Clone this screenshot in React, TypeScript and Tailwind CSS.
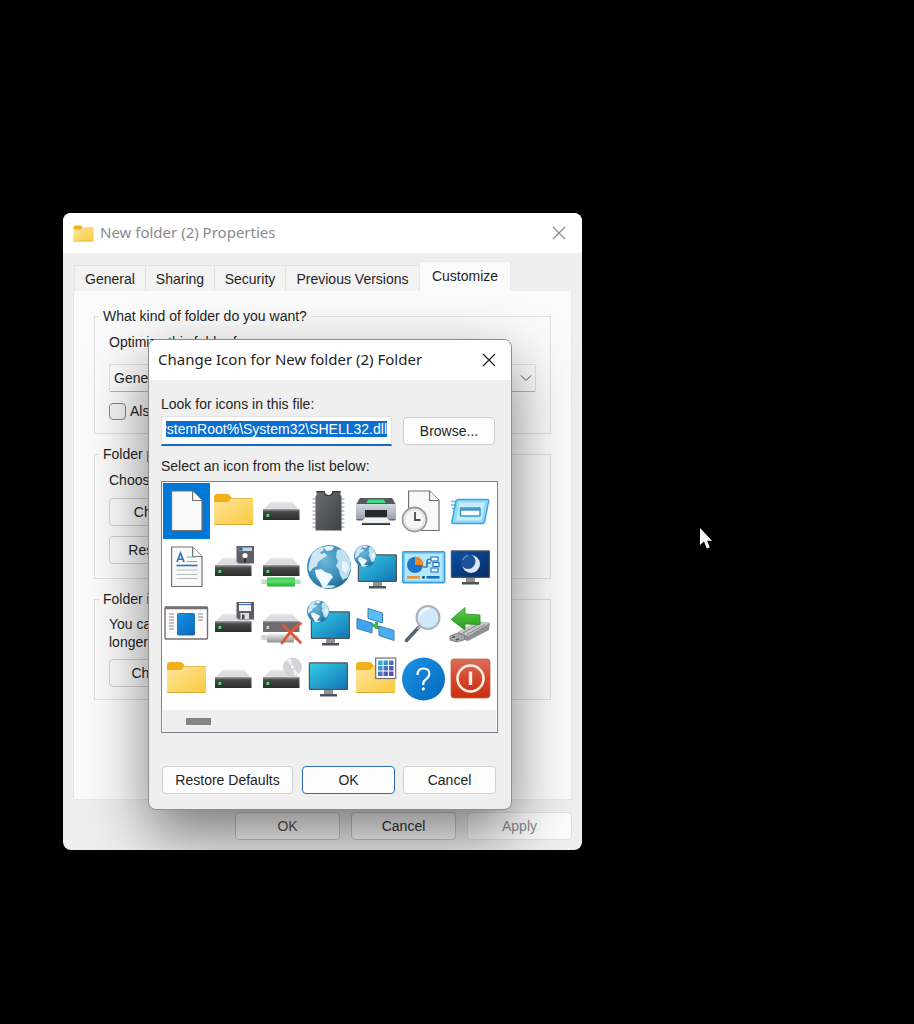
import React, { useEffect, useRef, useState } from 'react';

const fileName = '%SystemRoot%\\System32\\SHELL32.dll';

const Defs = () => (
  <svg width="0" height="0" className="absolute" aria-hidden="true">
    <defs>
      <linearGradient id="folder" x1="0" y1="0" x2="1" y2="1">
        <stop offset="0" stopColor="#ffe69c" />
        <stop offset="1" stopColor="#fbc93f" />
      </linearGradient>
      <linearGradient id="driveFront" x1="0" y1="0" x2="0" y2="1">
        <stop offset="0" stopColor="#6a6a6a" />
        <stop offset="0.3" stopColor="#454545" />
        <stop offset="1" stopColor="#2c2c2c" />
      </linearGradient>
      <linearGradient id="chip" x1="0" y1="0" x2="1" y2="1">
        <stop offset="0" stopColor="#6a6e72" />
        <stop offset="1" stopColor="#3d4145" />
      </linearGradient>
      <linearGradient id="screen" x1="0" y1="0" x2="1" y2="1">
        <stop offset="0" stopColor="#35d0e8" />
        <stop offset="1" stopColor="#1271b4" />
      </linearGradient>
      <linearGradient id="night" x1="0" y1="0" x2="1" y2="1">
        <stop offset="0" stopColor="#0b4fa0" />
        <stop offset="1" stopColor="#082a63" />
      </linearGradient>
      <linearGradient id="blue" x1="0" y1="0" x2="1" y2="1">
        <stop offset="0" stopColor="#1a93e6" />
        <stop offset="1" stopColor="#0668bd" />
      </linearGradient>
      <linearGradient id="red" x1="0" y1="0" x2="0" y2="1">
        <stop offset="0" stopColor="#d9705a" />
        <stop offset="0.5" stopColor="#d4462a" />
        <stop offset="1" stopColor="#c9300f" />
      </linearGradient>
      <linearGradient id="pipe" x1="0" y1="0" x2="0" y2="1">
        <stop offset="0" stopColor="#35c84a" />
        <stop offset="0.4" stopColor="#5fe070" />
        <stop offset="1" stopColor="#1fae36" />
      </linearGradient>
      <linearGradient id="metal" x1="0" y1="0" x2="0" y2="1">
        <stop offset="0" stopColor="#f2f2f2" />
        <stop offset="1" stopColor="#8f8f8f" />
      </linearGradient>
      <linearGradient id="printer" x1="0" y1="0" x2="0" y2="1">
        <stop offset="0" stopColor="#d3dae1" />
        <stop offset="1" stopColor="#98a2ad" />
      </linearGradient>
      <linearGradient id="arrow" x1="0" y1="0" x2="0" y2="1">
        <stop offset="0" stopColor="#5fd04a" />
        <stop offset="1" stopColor="#239a1c" />
      </linearGradient>
      <linearGradient id="grid" x1="0" y1="0" x2="1" y2="1">
        <stop offset="0" stopColor="#2ec4dd" />
        <stop offset="0.6" stopColor="#4a64b8" />
        <stop offset="1" stopColor="#6b3fa8" />
      </linearGradient>
      <radialGradient id="ocean" cx="0.4" cy="0.35" r="0.75">
        <stop offset="0" stopColor="#6cb6dc" />
        <stop offset="0.6" stopColor="#3a8cb9" />
        <stop offset="1" stopColor="#1b5f86" />
      </radialGradient>
    </defs>
  </svg>
);

const FolderShape = () => (
  <g>
    <path d="M4 14q0-3 3-3h10q1.500 0 2.500 1l2.500 3-3 4H4z" fill="#f3ae1b" />
    <path d="M4 19h14l4-4h20q1 0 1 1v25q0 1-1 1H5q-1 0-1-1z" fill="url(#folder)" />
    <path d="M4.500 41.500h38" stroke="#d9a838" strokeWidth="1" />
    <path d="M22 15.500h20.500" stroke="#e0b450" strokeWidth="0.800" />
  </g>
);

const DriveShape = ({ light = true }: { light?: boolean }) => (
  <g>
    <path d="M12.500 19h21.500l7.500 8H5z" fill="#dcdde0" />
    <path d="M12.500 19h21.500l1.500 1.600H11z" fill="#e9e9eb" />
    <rect x="5" y="26.500" width="36.500" height="10.500" fill={light ? 'url(#driveFront)' : '#6d6b6b'} />
    <path d="M5 27h36.500" stroke="#8a8a8a" strokeWidth="0.800" />
    <rect x="8.500" y="31" width="2.600" height="3" fill={light ? '#4fe070' : '#d0d0d0'} />
  </g>
);

const FloppyShape = ({ open }: { open?: boolean }) => (
  <g>
    <path d="M26.500 7H44v17.500H28.500l-2-2z" fill="#5e5f64" />
    {open ? (
      <>
        <rect x="29" y="8" width="12" height="8" fill="#f4f6fa" />
        <path d="M29 9.500h12" stroke="#3a76c8" strokeWidth="1.200" />
        <rect x="30.500" y="18" width="8.500" height="6" fill="#dfe0e3" />
        <rect x="32" y="19.500" width="2.500" height="4.500" fill="#44464b" />
      </>
    ) : (
      <>
        <rect x="28.500" y="8.500" width="13.500" height="3.500" fill="#c4d3e6" />
        <rect x="28.500" y="8.500" width="4" height="3" fill="#2c62a8" />
        <circle cx="35" cy="16.500" r="2.600" fill="#f5f5f5" />
        <rect x="34" y="19.500" width="2" height="4" fill="#26272b" />
      </>
    )}
  </g>
);

// land shapes are drawn on a 44px globe and scaled to r
const GlobeShape = ({ cx, cy, r }: { cx: number; cy: number; r: number }) => (
  <g transform={`translate(${cx} ${cy}) scale(${r / 22})`}>
    <circle r="22" fill="url(#ocean)" />
    <path d="M-17-13q4-5 9-7l3 1-1 3-3 1 1 2 4-1 2 3-5 3-4 3-1 4-4 2-3 4q-2-3-1-8z" fill="#cfe7f3" />
    <path d="M-6-20q6-2 11 0l-2 3-5 1z" fill="#eaf6fb" />
    <path d="M-14 3l6-1 4 3 6 2 2 3-4 5-3 5-3 1-3-6-4-6z" fill="#f0f9fd" />
    <path d="M8-17l5-1 4 4 4 7 1 8-3 9-5 3-3-5-1-5-3-4 2-5-2-4z" fill="#bfe0ef" />
    <path d="M13-6l5 1 2 5-3 6-4-3z" fill="#e9f5fb" />
    <path d="M-8 20q7-3 15-1-7 4-15 1z" fill="#d8edf7" />
  </g>
);

const MonitorShape = ({ fill = 'url(#screen)' }: { fill?: string }) => (
  <g>
    <rect x="19" y="38" width="9" height="5.500" fill="#8c9298" />
    <rect x="15" y="43" width="17" height="2.500" fill="#4c5258" />
    <rect x="4.400" y="11.900" width="38" height="26.500" rx="0.600" fill={fill} stroke="#4d565e" strokeWidth="1.200" />
  </g>
);

const PageShape = () => (
  <g>
    <path d="M8.600 8h21l9.400 9.500v30H8.600z" fill="#f9f9f9" stroke="#77706e" strokeWidth="1.200" />
    <path d="M29.600 8v9.500H39" fill="#fff" stroke="#77706e" strokeWidth="1.200" />
  </g>
);

const icons: { name: string; art: React.ReactNode }[] = [
  { name: 'Document', art: <PageShape /> },
  { name: 'Folder', art: <FolderShape /> },
  { name: 'Drive', art: <DriveShape /> },
  {
    name: 'Chip',
    art: (
      <g>
        <path d="M7.500 16h32M7.500 20h32M7.500 24h32M7.500 28h32M7.500 32h32M7.500 36h32M7.500 40h32M7.500 44h32" stroke="#b4b8bb" strokeWidth="1.400" />
        <path d="M11.500 8h7.500q.5 4.500 4.500 4.500T28 8h7.500v4l1 1v34.500h-26V13l1-1z" fill="url(#chip)" />
        <path d="M11.500 8.600h7.700q.6 4 4.300 4t4.300-4h7.700" fill="none" stroke="#34383b" strokeWidth="1.200" />
      </g>
    ),
  },
  {
    name: 'Printer',
    art: (
      <g>
        <path d="M8 15h32l4 6.500H4z" fill="#54585c" />
        <path d="M16 16.500h16l1.500 3.500H14.500z" fill="#3fdc84" />
        <rect x="4" y="21" width="40" height="15.500" rx="1" fill="url(#printer)" />
        <rect x="13" y="27" width="22" height="8" fill="#26292c" />
        <path d="M4 36h7l-.5 1.500H5zM37 36h7l-1 1.500h-5.500z" fill="#5f666d" />
        <path d="M10.500 39.500h27l1 2.500H9.500z" fill="#2f3235" />
        <path d="M13 34.500h22l2.500 5.500h-27z" fill="#f1f3f5" stroke="#c4c8cc" strokeWidth="0.500" />
      </g>
    ),
  },
  {
    name: 'Recent document',
    art: (
      <g>
        <PageShape />
        <circle cx="14.500" cy="36.500" r="12" fill="#eeeeee" stroke="#9b9b9b" strokeWidth="1.800" />
        <circle cx="14.500" cy="36.500" r="9.800" fill="#f7f7f7" stroke="#d6d6d6" strokeWidth="0.800" />
        <path d="M15 29v8h5.500" fill="none" stroke="#4b4b4b" strokeWidth="1.800" />
      </g>
    ),
  },
  {
    name: 'Run',
    art: (
      <g>
        <path d="M4 18.500h8M4 22h7M5 25.500h6" stroke="#62bdea" strokeWidth="1.300" />
        <path d="M11 16.500h29q2 0 1.600 2l-4 20q-.4 2-2.400 2H6.500q-2 0-1.600-2l4-20q.4-2 2.100-2z" fill="#8fd8f7" stroke="#3ba3dc" strokeWidth="1.400" />
        <path d="M12.500 19.500h25.500l-3.500 18H9z" fill="#c4ecfb" />
        <rect x="13.500" y="25" width="19.500" height="8" rx="0.600" fill="#fff" stroke="#3b97cf" strokeWidth="1.500" />
        <path d="M13.500 26.500H33" stroke="#3b97cf" strokeWidth="2.400" />
      </g>
    ),
  },
  {
    name: 'Text document',
    art: (
      <g>
        <PageShape />
        <path d="M14 23l3.500-9 3.500 9M15.200 20.300h4.600" fill="none" stroke="#2a6fc2" strokeWidth="1.600" />
        <path d="M24 18h9M24 22.500h10" stroke="#5cb6e4" strokeWidth="1.200" />
        <path d="M13.500 26.500h21" stroke="#2a6fc2" strokeWidth="1.600" />
        <path d="M13.500 31h21M13.500 35.500h21M13.500 39.500h21" stroke="#b5b9bd" strokeWidth="1.200" />
      </g>
    ),
  },
  { name: 'Floppy drive', art: <g><DriveShape /><FloppyShape /></g> },
  {
    name: 'Network drive',
    art: (
      <g>
        <DriveShape />
        <rect x="3.500" y="40.500" width="39" height="4.500" fill="#b8dcc0" />
        <rect x="9" y="38.500" width="28" height="9" rx="1" fill="url(#pipe)" />
      </g>
    ),
  },
  { name: 'Globe', art: <GlobeShape cx={24} cy={28} r={22} /> },
  {
    name: 'Internet',
    art: (
      <g>
        <g transform="translate(2 4)"><MonitorShape /></g>
        <GlobeShape cx={13} cy={17} r={11} />
      </g>
    ),
  },
  {
    name: 'Control panel',
    art: (
      <g>
        <rect x="2.700" y="12.700" width="42" height="31" rx="1" fill="#7fcdf3" stroke="#3a9fd8" strokeWidth="1.400" />
        <rect x="5" y="15" width="37.500" height="26.500" fill="#b5e8fc" />
        <circle cx="15" cy="26" r="8" fill="#1a76cc" />
        <path d="M15 26v-8.500a8.500 8.500 0 0 1 8.500 8.500z" fill="#ee8a22" />
        <path d="M23 28h4v-6q0-2 4-2M27 24h4" fill="none" stroke="#1d4e86" strokeWidth="1.200" />
        <rect x="31" y="18" width="7" height="4" fill="#e9f8ff" stroke="#1b69b5" />
        <rect x="33" y="23.500" width="6" height="4" fill="#e9f8ff" stroke="#1b69b5" />
        <rect x="31" y="29" width="7" height="4" fill="#e9f8ff" stroke="#1b69b5" />
        <rect x="7" y="37" width="13" height="2.600" fill="#e89232" />
        <circle cx="23.500" cy="38.300" r="1.400" fill="#12406f" />
        <rect x="26.500" y="37" width="13" height="2.600" fill="#1973c4" />
      </g>
    ),
  },
  {
    name: 'Sleep',
    art: (
      <g>
        <MonitorShape fill="url(#night)" />
        <circle cx="24" cy="25" r="9" fill="#dfe8f4" />
        <circle cx="21" cy="22.500" r="7.500" fill="#1c5299" />
        <path d="M16 21q1-4 5-4.500" fill="none" stroke="#7da6d6" strokeWidth="1" />
      </g>
    ),
  },
  {
    name: 'Window',
    art: (
      <g>
        <rect x="2" y="12" width="42.500" height="32" rx="1" fill="#fbfbfb" stroke="#77706e" strokeWidth="1.400" />
        <path d="M2 13h42.500" stroke="#77706e" strokeWidth="2.600" />
        <path d="M6 19h5M6 22h5M6 25h5M6 28h5M6 31h5M6 34h5M35 19h5M35 22h5M35 25h5" stroke="#8a8886" strokeWidth="1.100" />
        <rect x="14.500" y="18.500" width="17" height="21.500" rx="0.800" fill="url(#blue)" stroke="#0c5ea8" strokeWidth="0.800" />
      </g>
    ),
  },
  { name: 'Floppy disk drive', art: <g><DriveShape /><FloppyShape open /></g> },
  {
    name: 'Disconnected drive',
    art: (
      <g>
        <DriveShape light={false} />
        <rect x="3.500" y="40" width="37" height="5" fill="#d6d6d6" />
        <rect x="9" y="38.500" width="27" height="9" rx="1" fill="url(#metal)" />
        <path d="M24.500 29.500l18 18M42.500 28.500q-10 7-18.500 19.500" fill="none" stroke="#dc5a34" strokeWidth="2.800" strokeLinecap="round" />
      </g>
    ),
  },
  {
    name: 'Network computer',
    art: (
      <g>
        <g transform="translate(2 5)"><MonitorShape /></g>
        <GlobeShape cx={13} cy={16.500} r={11} />
      </g>
    ),
  },
  {
    name: 'Network',
    art: (
      <g>
        <path d="M18 29l12 5M24.500 27v7" stroke="#3fb54a" strokeWidth="3" />
        <path d="M16 13.500l14.500 4.500v10l-14.500-4.500z" fill="#5bbdf5" stroke="#3f7fb0" />
        <path d="M5 23.500l15 4.500v10l-15-4.500z" fill="#3fa4ec" stroke="#3f7fb0" />
        <path d="M27 31l15 4.500v10L27 40.500z" fill="#4aaef0" stroke="#3f7fb0" />
      </g>
    ),
  },
  {
    name: 'Search',
    art: (
      <g>
        <path d="M19 32L6.500 45.500" stroke="#5b6572" strokeWidth="3.600" strokeLinecap="round" />
        <path d="M20.500 30.500l-3 3.500" stroke="#a7b0ba" strokeWidth="2" />
        <circle cx="28" cy="22.500" r="11.500" fill="#cfe9fb" stroke="#a9b0b8" strokeWidth="2" />
        <path d="M20 20q2-6 9-6.500" fill="none" stroke="#f2fbff" strokeWidth="2.500" />
      </g>
    ),
  },
  {
    name: 'Eject drive',
    art: (
      <g>
        <path d="M11 37l20-11 12 2-1 7-21 11-10-3z" fill="#8d9093" />
        <path d="M11 37l20-11 12 2-22 13z" fill="#c6c8ca" />
        <path d="M16 38l18-10M20 39.500l18-10" stroke="#808386" strokeWidth="1" />
        <path d="M3 41l8-3 7 2.500-1 4.500-7 2-7-2z" fill="#a4a7aa" stroke="#6e7174" strokeWidth="0.800" />
        <path d="M5 42.500l3-1M9 45l3-1" stroke="#3e4144" strokeWidth="1.200" />
        <path d="M4 24.500l14-12v6.500l15 1v9.500l-15-.5v6z" fill="url(#arrow)" stroke="#279022" strokeWidth="0.800" />
      </g>
    ),
  },
  { name: 'Open folder', art: <FolderShape /> },
  { name: 'Removable drive', art: <DriveShape /> },
  {
    name: 'CD drive',
    art: (
      <g>
        <DriveShape />
        <circle cx="34.500" cy="16" r="9" fill="#d3d5d8" stroke="#bfc1c4" strokeWidth="0.600" />
        <path d="M34.500 16l-6-6.500a9 9 0 0 1 4-2.300zM34.500 16l6 6.500a9 9 0 0 1-4 2.300z" fill="#f2f2f4" />
        <circle cx="34.500" cy="16" r="2.200" fill="#fff" stroke="#b5b7ba" strokeWidth="0.600" />
      </g>
    ),
  },
  { name: 'Computer', art: <MonitorShape /> },
  {
    name: 'Programs',
    art: (
      <g>
        <FolderShape />
        <rect x="23.700" y="7" width="20" height="20.500" fill="#fff" stroke="#6f6f73" strokeWidth="1.200" />
        <path d="M26 9.500h4.500v4.500H26zM31.500 9.500H36v4.500h-4.500zM37 9.500h4.500v4.500H37zM26 15h4.500v4.500H26zM31.500 15H36v4.500h-4.500zM37 15h4.500v4.500H37zM26 20.500h4.500V25H26zM31.500 20.500H36V25h-4.500zM37 20.500h4.500V25H37z" fill="url(#grid)" />
      </g>
    ),
  },
  {
    name: 'Help',
    art: (
      <g>
        <circle cx="23.500" cy="28" r="21.500" fill="url(#blue)" />
        <path d="M17.500 24q0-6.500 6-6.500 5.800 0 5.800 5.300 0 3-3 5.200-3 2.200-3 4.500v1.500" fill="none" stroke="#fff" strokeWidth="2.200" />
        <circle cx="23.300" cy="37.800" r="1.600" fill="#fff" />
      </g>
    ),
  },
  {
    name: 'Shut down',
    art: (
      <g>
        <rect x="4" y="8" width="39" height="39" rx="3" fill="url(#red)" stroke="#b7654f" strokeWidth="0.800" />
        <circle cx="23.500" cy="27.500" r="13" fill="none" stroke="#fbeee9" strokeWidth="2.600" />
        <path d="M23.500 20.500v13.500" stroke="#fbeee9" strokeWidth="3.400" />
      </g>
    ),
  },
];

const CloseIcon = () => (
  <svg width="14" height="14" viewBox="0 0 14 14" fill="none" stroke="currentColor" strokeWidth="1.200">
    <path d="M1 1l12 12M13 1L1 13" />
  </svg>
);

interface PushButtonProps {
  children: React.ReactNode;
  className?: string;
  disabled?: boolean;
}

const PushButton: React.FC<PushButtonProps> = ({ children, className = 'border-[#d0d0d0]', disabled }) => (
  <button
    type="button"
    disabled={disabled}
    className={`h-7 rounded border bg-[#fdfdfd] text-center whitespace-nowrap ${className}`}
  >
    {children}
  </button>
);

const tabs = [
  { label: 'General', width: 'w-[71px]' },
  { label: 'Sharing', width: 'w-[69px]' },
  { label: 'Security', width: 'w-[71px]' },
  { label: 'Previous Versions', width: 'w-[134px]' },
];

const PropertiesWindow = () => (
  <section className="absolute top-[213px] left-[63px] w-[519px] overflow-hidden rounded-lg bg-[#efefef]">
    <header className="flex h-10 items-center gap-[6px] bg-white pr-4 pl-[10px] text-[#8b8b8b]">
      <svg width="21" height="17" viewBox="3 10 41 33">
        <FolderShape />
      </svg>
      <h1 className="flex-1 font-['Noto_Sans'] text-[15px]">New folder (2) Properties</h1>
      <button type="button" aria-label="Close properties"><CloseIcon /></button>
    </header>

    <div className="px-[10px] pt-2 pb-[10px]">
      <div className="flex items-end pl-px" role="tablist">
        {tabs.map((tab) => (
          <button
            key={tab.label}
            type="button"
            role="tab"
            aria-selected="false"
            className={`h-[26px] border-t border-l border-[#e2e2e2] bg-[#f3f3f3] whitespace-nowrap ${tab.width}`}
          >
            {tab.label}
          </button>
        ))}
        <button type="button" role="tab" aria-selected="true" className="h-[30px] w-[92px] border-x border-t border-[#e8e8e8] bg-[#fbfbfb] pb-0.5">
          Customize
        </button>
      </div>

      <div className="border border-t-0 border-[#e6e6e6] bg-[#fbfbfb] px-5 pt-[15px] pb-[99px]">
        <fieldset className="border border-[#dfdfdf] px-[14px] pb-3">
          <legend className="-ml-[10px] px-1 leading-5">What kind of folder do you want?</legend>
          <label htmlFor="template" className="mt-1.5 block leading-5">Optimize this folder for:</label>
          <div className="relative mt-3">
            <select id="template" className="h-7 w-full appearance-none rounded-xs border border-b-[#b5b5b5] border-[#e2e2e2] bg-[#fdfdfd] pl-1">
              <option>General items</option>
            </select>
            <svg width="12" height="8" viewBox="0 0 12 8" fill="none" stroke="#555" className="pointer-events-none absolute top-[10px] right-1">
              <path d="M1 1.500l5 5 5-5" />
            </svg>
          </div>
          <label className="mt-[9px] flex items-center gap-1 leading-5">
            <input type="checkbox" className="h-[17px] w-[17px] appearance-none rounded border border-[#868686] bg-[#f5f5f5]" />
            Also apply this template to all subfolders
          </label>
        </fieldset>

        <fieldset className="mt-[10px] border border-[#dfdfdf] px-[14px] pb-[14px]">
          <legend className="-ml-[10px] px-1 leading-5">Folder pictures</legend>
          <p className="mt-1.5 leading-5">Choose a file to show on this folder icon.</p>
          <div className="mt-2 flex flex-col gap-[10px]">
            <PushButton className="w-[136px] border-[#d0d0d0]">Choose File...</PushButton>
            <PushButton className="w-[136px] border-[#d0d0d0]">Restore Default</PushButton>
          </div>
        </fieldset>

        <fieldset className="mt-[10px] border border-[#dfdfdf] px-[14px] pb-3">
          <legend className="-ml-[10px] px-1 leading-5">Folder icons</legend>
          <p className="mt-1.5 leading-[18px]">
            You can change the folder icon. If you change the icon, it will no longer show a preview of the folder's contents.
          </p>
          <PushButton className="mt-2 w-[136px] border-[#d0d0d0]">Change Icon...</PushButton>
        </fieldset>
      </div>

      <footer className="mt-3 flex justify-end gap-[11px]">
        <PushButton className="w-[105px] border-[#c8c8c8] text-[#555]">OK</PushButton>
        <PushButton className="w-[105px] border-[#c8c8c8] text-[#333]">Cancel</PushButton>
        <PushButton className="w-[105px] border-[#e0e0e0] bg-[#f6f6f6] text-[#8b8b8b]" disabled>Apply</PushButton>
      </footer>
    </div>
  </section>
);

const ChangeIconDialog = () => {
  const [selected, setSelected] = useState(0);
  const fileRef = useRef<HTMLInputElement>(null);

  useEffect(() => {
    const field = fileRef.current;
    if (!field) return;
    field.focus();
    field.select();
    field.scrollLeft = field.scrollWidth;
  }, []);

  return (
    <section
      role="dialog"
      aria-label="Change Icon"
      className="absolute top-[339px] left-[148px] w-[364px] overflow-hidden rounded-lg border border-[#8d8d8d] bg-[#efefef] shadow-[0_24px_60px_rgba(0,0,0,0.5)]"
    >
      <header className="flex h-10 items-center bg-white pr-[15px] pl-[9px]">
        <h2 className="flex-1 font-['Noto_Sans'] text-[15px]">Change Icon for New folder (2) Folder</h2>
        <button type="button" aria-label="Close dialog"><CloseIcon /></button>
      </header>

      <div className="px-3 pt-[14px] pb-[15px]">
        <label htmlFor="icon-file" className="block leading-5">Look for icons in this file:</label>
        <div className="mt-0.5 flex items-center justify-between pr-1">
          <input
            id="icon-file"
            ref={fileRef}
            defaultValue={fileName}
            className="h-[30px] w-[231px] border border-b-2 border-[#e2e2e2] border-b-[#1268c4] bg-white px-1 pb-[3px] outline-none selection:bg-[#0a6fd0] selection:text-white"
          />
          <PushButton className="w-[92px] border-[#d0d0d0]">Browse...</PushButton>
        </div>

        <p className="mt-[10px] leading-5">Select an icon from the list below:</p>
        <div className="mt-[5px] mr-px border border-[#82828f] bg-white p-px pb-0" role="listbox" aria-label="Icons">
          <div className="grid grid-cols-7 pr-0.5">
            {icons.map((icon, i) => (
              <button
                key={icon.name}
                type="button"
                role="option"
                aria-label={icon.name}
                aria-selected={selected === i}
                onClick={() => setSelected(i)}
                className={`flex h-14 justify-center ${selected === i ? 'bg-[#0078d7]' : 'bg-white'}`}
              >
                <svg width="47" height="56" viewBox="0 0 47 56">{icon.art}</svg>
              </button>
            ))}
          </div>
          <div className="mt-[3px] flex h-[22px] items-center bg-[#efefef] pl-[23px]">
            <div className="h-[7px] w-[25px] bg-[#858585]" />
          </div>
        </div>

        <footer className="mt-[33px] flex justify-between pr-[3px] pl-px">
          <PushButton className="w-[131px] border-[#d0d0d0]">Restore Defaults</PushButton>
          <div className="flex gap-2">
            <PushButton className="w-[93px] border-[#2d6ac0]">OK</PushButton>
            <PushButton className="w-[93px] border-[#d0d0d0]">Cancel</PushButton>
          </div>
        </footer>
      </div>
    </section>
  );
};

const App: React.FC = () => {
  return (
    <main className="relative min-h-screen overflow-hidden bg-black font-['Liberation_Sans',sans-serif] text-sm text-[#1f1f1f]">
      <Defs />
      <PropertiesWindow />
      <ChangeIconDialog />

      {/* Mouse pointer */}
      <svg width="14" height="24" viewBox="0 0 14 24" className="absolute top-[527px] left-[699px]">
        <path d="M1 1v17l4-3.500 2.800 7 3-1.200-2.800-6.600h5z" fill="#fff" />
      </svg>
    </main>
  );
};

export default App;
